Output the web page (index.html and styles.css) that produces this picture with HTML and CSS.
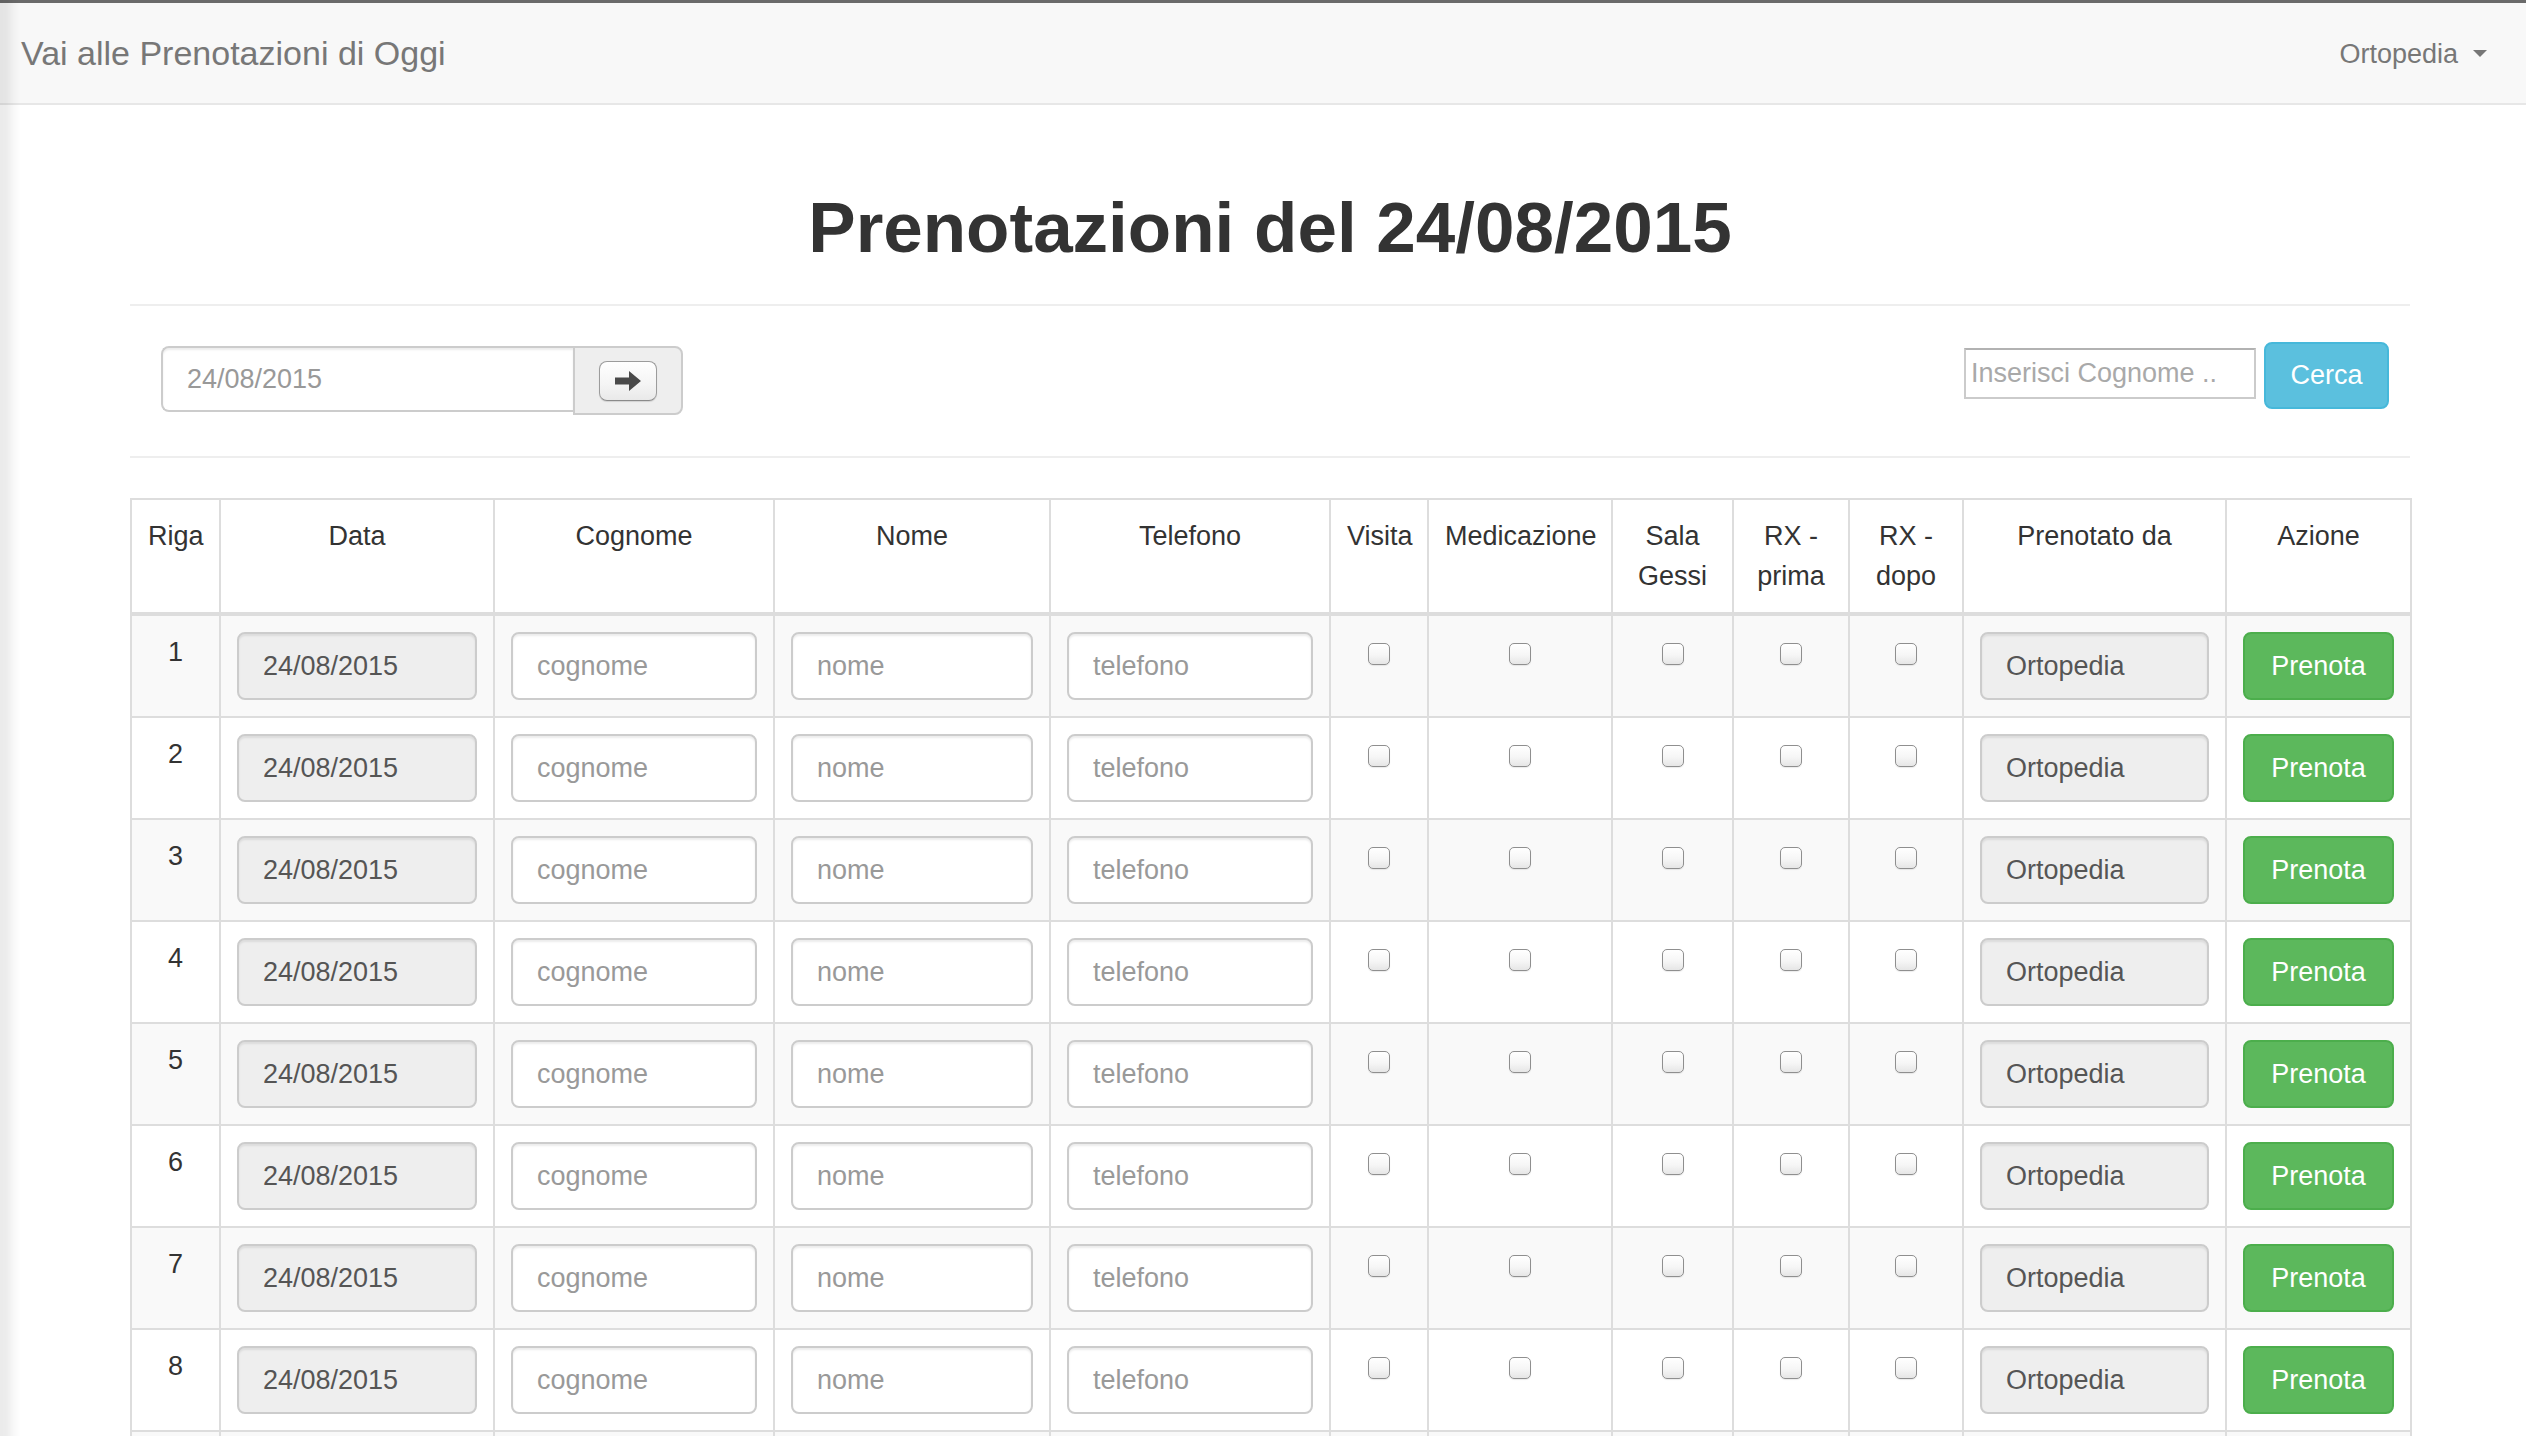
FILE: index.html
```html
<!DOCTYPE html>
<html lang="it">
<head>
<meta charset="utf-8">
<title>Prenotazioni</title>
<link rel="stylesheet" href="styles.css">
</head>
<body>
<div class="edge-shadow"></div>
<nav class="navbar">
  <a class="brand" href="#">Vai alle Prenotazioni di Oggi</a>
  <div class="nav-right"><span>Ortopedia</span><span class="caret"></span></div>
</nav>
<div class="page">
  <main class="container">
    <div class="page-header"><h1>Prenotazioni del 24/08/2015</h1></div>
    <div class="toolbar">
      <div class="date-group">
        <input class="date-input" type="text" placeholder="24/08/2015">
        <span class="addon">
          <button class="go-btn" type="button">
            <svg width="28" height="22" viewBox="0 0 28 22"><path d="M1 7.5 H15 V1 L27 11 L15 21 V14.5 H1 Z" fill="#4a4a4a"/></svg>
          </button>
        </span>
      </div>
      <form class="search">
        <input class="search-input" type="text" placeholder="Inserisci Cognome ..">
        <button class="btn-info" type="button">Cerca</button>
      </form>
    </div>
    <div class="divider"></div>
    <table class="bookings">
      <colgroup>
        <col class="c-riga"><col class="c-data"><col class="c-cogn"><col class="c-nome"><col class="c-tel">
        <col class="c-vis"><col class="c-med"><col class="c-sala"><col class="c-rxp"><col class="c-rxd">
        <col class="c-pren"><col class="c-az">
      </colgroup>
      <thead>
        <tr>
          <th>Riga</th><th>Data</th><th>Cognome</th><th>Nome</th><th>Telefono</th>
          <th>Visita</th><th>Medicazione</th><th>Sala Gessi</th><th>RX - prima</th><th>RX - dopo</th>
          <th>Prenotato da</th><th>Azione</th>
        </tr>
      </thead>
      <tbody>
        <tr><td>1</td><td><input class="fc ro" value="24/08/2015" readonly></td><td><input class="fc" placeholder="cognome"></td><td><input class="fc" placeholder="nome"></td><td><input class="fc" placeholder="telefono"></td><td><input type="checkbox" class="cb"></td><td><input type="checkbox" class="cb"></td><td><input type="checkbox" class="cb"></td><td><input type="checkbox" class="cb"></td><td><input type="checkbox" class="cb"></td><td><input class="fc ro" value="Ortopedia" readonly></td><td><button class="btn-success" type="button">Prenota</button></td></tr>
        <tr><td>2</td><td><input class="fc ro" value="24/08/2015" readonly></td><td><input class="fc" placeholder="cognome"></td><td><input class="fc" placeholder="nome"></td><td><input class="fc" placeholder="telefono"></td><td><input type="checkbox" class="cb"></td><td><input type="checkbox" class="cb"></td><td><input type="checkbox" class="cb"></td><td><input type="checkbox" class="cb"></td><td><input type="checkbox" class="cb"></td><td><input class="fc ro" value="Ortopedia" readonly></td><td><button class="btn-success" type="button">Prenota</button></td></tr>
        <tr><td>3</td><td><input class="fc ro" value="24/08/2015" readonly></td><td><input class="fc" placeholder="cognome"></td><td><input class="fc" placeholder="nome"></td><td><input class="fc" placeholder="telefono"></td><td><input type="checkbox" class="cb"></td><td><input type="checkbox" class="cb"></td><td><input type="checkbox" class="cb"></td><td><input type="checkbox" class="cb"></td><td><input type="checkbox" class="cb"></td><td><input class="fc ro" value="Ortopedia" readonly></td><td><button class="btn-success" type="button">Prenota</button></td></tr>
        <tr><td>4</td><td><input class="fc ro" value="24/08/2015" readonly></td><td><input class="fc" placeholder="cognome"></td><td><input class="fc" placeholder="nome"></td><td><input class="fc" placeholder="telefono"></td><td><input type="checkbox" class="cb"></td><td><input type="checkbox" class="cb"></td><td><input type="checkbox" class="cb"></td><td><input type="checkbox" class="cb"></td><td><input type="checkbox" class="cb"></td><td><input class="fc ro" value="Ortopedia" readonly></td><td><button class="btn-success" type="button">Prenota</button></td></tr>
        <tr><td>5</td><td><input class="fc ro" value="24/08/2015" readonly></td><td><input class="fc" placeholder="cognome"></td><td><input class="fc" placeholder="nome"></td><td><input class="fc" placeholder="telefono"></td><td><input type="checkbox" class="cb"></td><td><input type="checkbox" class="cb"></td><td><input type="checkbox" class="cb"></td><td><input type="checkbox" class="cb"></td><td><input type="checkbox" class="cb"></td><td><input class="fc ro" value="Ortopedia" readonly></td><td><button class="btn-success" type="button">Prenota</button></td></tr>
        <tr><td>6</td><td><input class="fc ro" value="24/08/2015" readonly></td><td><input class="fc" placeholder="cognome"></td><td><input class="fc" placeholder="nome"></td><td><input class="fc" placeholder="telefono"></td><td><input type="checkbox" class="cb"></td><td><input type="checkbox" class="cb"></td><td><input type="checkbox" class="cb"></td><td><input type="checkbox" class="cb"></td><td><input type="checkbox" class="cb"></td><td><input class="fc ro" value="Ortopedia" readonly></td><td><button class="btn-success" type="button">Prenota</button></td></tr>
        <tr><td>7</td><td><input class="fc ro" value="24/08/2015" readonly></td><td><input class="fc" placeholder="cognome"></td><td><input class="fc" placeholder="nome"></td><td><input class="fc" placeholder="telefono"></td><td><input type="checkbox" class="cb"></td><td><input type="checkbox" class="cb"></td><td><input type="checkbox" class="cb"></td><td><input type="checkbox" class="cb"></td><td><input type="checkbox" class="cb"></td><td><input class="fc ro" value="Ortopedia" readonly></td><td><button class="btn-success" type="button">Prenota</button></td></tr>
        <tr><td>8</td><td><input class="fc ro" value="24/08/2015" readonly></td><td><input class="fc" placeholder="cognome"></td><td><input class="fc" placeholder="nome"></td><td><input class="fc" placeholder="telefono"></td><td><input type="checkbox" class="cb"></td><td><input type="checkbox" class="cb"></td><td><input type="checkbox" class="cb"></td><td><input type="checkbox" class="cb"></td><td><input type="checkbox" class="cb"></td><td><input class="fc ro" value="Ortopedia" readonly></td><td><button class="btn-success" type="button">Prenota</button></td></tr>
        <tr><td>9</td><td><input class="fc ro" value="24/08/2015" readonly></td><td><input class="fc" placeholder="cognome"></td><td><input class="fc" placeholder="nome"></td><td><input class="fc" placeholder="telefono"></td><td><input type="checkbox" class="cb"></td><td><input type="checkbox" class="cb"></td><td><input type="checkbox" class="cb"></td><td><input type="checkbox" class="cb"></td><td><input type="checkbox" class="cb"></td><td><input class="fc ro" value="Ortopedia" readonly></td><td><button class="btn-success" type="button">Prenota</button></td></tr>
      </tbody>
    </table>
  </main>
</div>
</body>
</html>
```
FILE: styles.css
```css
* { box-sizing: border-box; }
html, body { margin: 0; padding: 0; }
body {
  font-family: "Liberation Sans", Arial, Helvetica, sans-serif;
  font-size: 27px;
  line-height: 40px;
  color: #333;
  background: #fff;
}
.edge-shadow {
  position: fixed;
  left: 0; top: 0; bottom: 0;
  width: 20px;
  background: linear-gradient(to right, rgba(0,0,0,0.08) 0, rgba(0,0,0,0.075) 6px, rgba(0,0,0,0.03) 13px, rgba(0,0,0,0) 20px);
  pointer-events: none;
  z-index: 10;
}
.navbar {
  height: 105px;
  background: #f8f8f8;
  border-top: 3px solid #6a6a6a;
  border-bottom: 2px solid #e7e7e7;
  display: flex;
  align-items: flex-start;
  justify-content: space-between;
  padding: 0 39px 0 21px;
}
.brand {
  margin-top: 30px;
  font-size: 34px;
  line-height: 40px;
  color: #777;
  text-decoration: none;
}
.nav-right {
  margin-top: 31px;
  display: flex;
  align-items: center;
  gap: 15px;
  color: #777;
  font-size: 27px;
  line-height: 40px;
}
.caret {
  width: 0; height: 0;
  border-top: 7px solid #777;
  border-left: 7px solid transparent;
  border-right: 7px solid transparent;
  margin-top: -2px;
}
.page { margin-left: 14px; }
.container { width: 2280px; margin: 0 auto; }
.page-header {
  padding-top: 83px;
  padding-bottom: 37px;
  border-bottom: 2px solid #eee;
}
.page-header h1 {
  margin: 0;
  font-size: 71px;
  line-height: 79px;
  font-weight: bold;
  text-align: center;
  color: #333;
}
.toolbar {
  margin-top: 40px;
  height: 70px;
  display: flex;
  justify-content: space-between;
  align-items: flex-start;
}
.date-group {
  margin-left: 31px;
  display: flex;
  align-items: flex-start;
}
.date-input {
  width: 412px;
  height: 66px;
  border: 2px solid #ccc;
  border-right: none;
  border-radius: 8px 0 0 8px;
  box-shadow: inset 0 2px 2px rgba(0,0,0,0.075);
  padding: 0 24px;
  font-family: inherit;
  font-size: 27px;
  color: #555;
  background: #fff;
  outline: none;
}
.date-input::placeholder { color: #999; }
.addon {
  width: 110px;
  height: 69px;
  background: #eee;
  border: 2px solid #ccc;
  border-radius: 0 8px 8px 0;
  display: flex;
  align-items: center;
  justify-content: center;
}
.go-btn {
  width: 58px;
  height: 40px;
  padding: 0;
  border: 1.5px solid #9c9c9c;
  border-bottom-color: #8a8a8a;
  border-radius: 8px;
  background: linear-gradient(#ffffff, #f4f4f4 60%, #e9e9e9);
  box-shadow: 0 1px 1px rgba(0,0,0,0.12);
  display: flex;
  align-items: center;
  justify-content: center;
}
.search {
  margin: -4px 21px 0 0;
  display: flex;
  align-items: flex-start;
  gap: 8px;
}
.search-input {
  margin-top: 6px;
  width: 292px;
  height: 51px;
  border: 2px solid #cbcbcb;
  border-top-color: #b2b2b2;
  border-radius: 0;
  padding: 0 5px;
  font-family: inherit;
  font-size: 27px;
  color: #333;
  background: #fff;
  outline: none;
}
.search-input::placeholder { color: #a9a9a9; }
.btn-info {
  width: 125px;
  height: 67px;
  background: #5bc0de;
  border: 2px solid #46b8da;
  border-radius: 8px;
  color: #fff;
  font-family: inherit;
  font-size: 27px;
  padding: 0;
}
.divider {
  margin-top: 40px;
  height: 2px;
  background: #eee;
}
.bookings {
  margin-top: 40px;
  width: 2280px;
  table-layout: fixed;
  border-collapse: collapse;
  border: 2px solid #ddd;
}
.c-riga { width: 89px; }
.c-data { width: 274px; }
.c-cogn { width: 280px; }
.c-nome { width: 276px; }
.c-tel { width: 280px; }
.c-vis { width: 98px; }
.c-med { width: 184px; }
.c-sala { width: 121px; }
.c-rxp { width: 116px; }
.c-rxd { width: 114px; }
.c-pren { width: 263px; }
.c-az { width: 185px; }
.bookings th,
.bookings td {
  padding: 16px;
  border: 2px solid #ddd;
  vertical-align: top;
  text-align: center;
  line-height: 40px;
}
.bookings th {
  font-weight: normal;
  border-bottom-width: 4px;
}
.bookings tbody tr:nth-child(odd) { background: #f9f9f9; }
.fc {
  display: block;
  width: 100%;
  height: 68px;
  border: 2px solid #ccc;
  border-radius: 8px;
  box-shadow: inset 0 2px 2px rgba(0,0,0,0.075);
  padding: 0 24px;
  font-family: inherit;
  font-size: 27px;
  color: #555;
  background: #fff;
  outline: none;
}
.fc::placeholder { color: #999; }
.fc.ro { background: #eee; }
.cb {
  -webkit-appearance: none;
  appearance: none;
  display: inline-block;
  width: 22px;
  height: 22px;
  margin: 11px 0 0;
  border: 1.5px solid #8f8f8f;
  border-radius: 5px;
  background: linear-gradient(#ffffff, #f6f6f6 55%, #e6e6e6);
  box-shadow: 0 1px 1px rgba(0,0,0,0.08);
  vertical-align: top;
}
.btn-success {
  display: block;
  width: 100%;
  height: 68px;
  background: #5cb85c;
  border: 2px solid #4cae4c;
  border-radius: 8px;
  color: #fff;
  font-family: inherit;
  font-size: 27px;
  padding: 0;
}
```
